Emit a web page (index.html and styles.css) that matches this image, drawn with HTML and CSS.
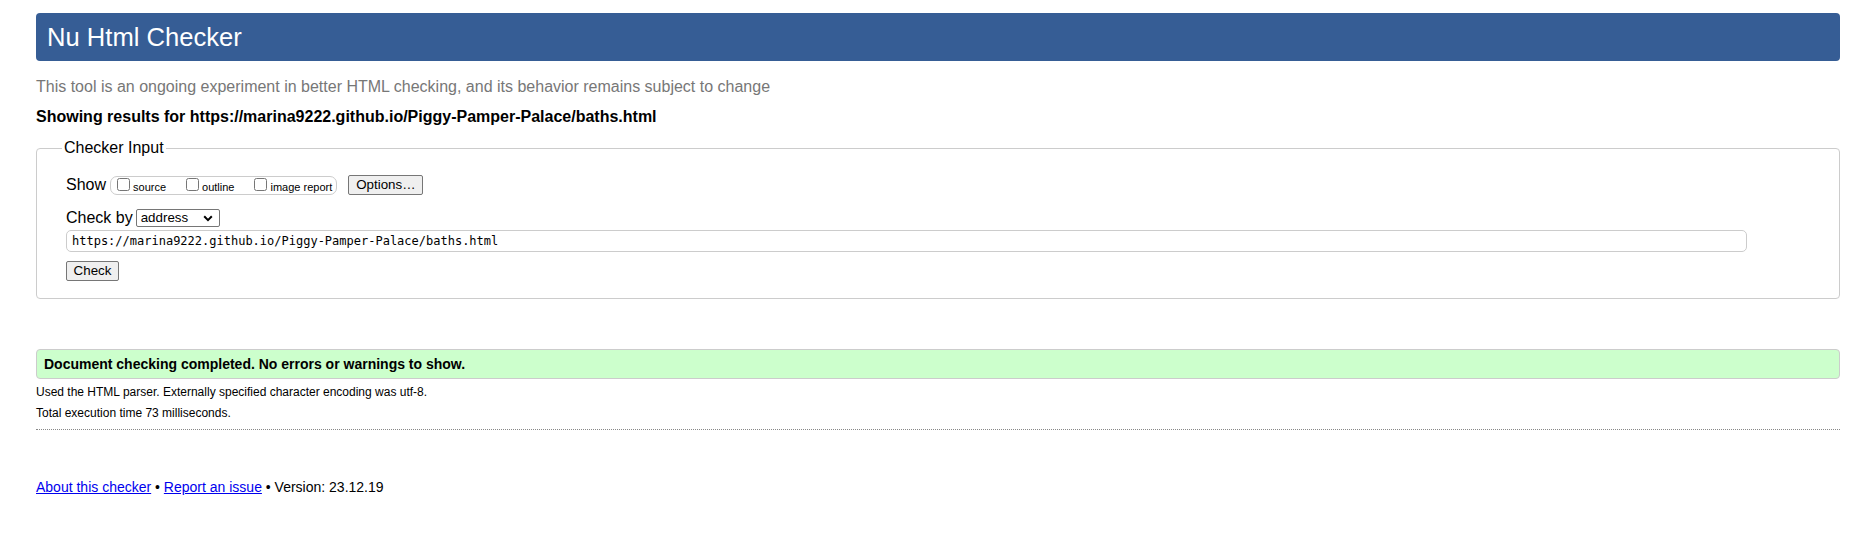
FILE: index.html
```html
<!DOCTYPE html>
<html lang="en">
<head>
<meta charset="utf-8">
<title>Showing results for https://marina9222.github.io/Piggy-Pamper-Palace/baths.html - Nu Html Checker</title>
<link rel="stylesheet" href="styles.css">
</head>
<body>
<div class="page">
  <h1 class="masthead">Nu Html Checker</h1>
  <p class="intro">This tool is an ongoing experiment in better HTML checking, and its behavior remains subject to change</p>
  <h2 class="results-for">Showing results for https://marina9222.github.io/Piggy-Pamper-Palace/baths.html</h2>

  <fieldset class="checker-input">
    <legend class="checker-legend">Checker Input</legend>
    <div class="row show-row">
      <span class="row-label">Show</span>
      <span class="show-group">
        <label class="opt"><input type="checkbox" class="cb"><span>source</span></label>
        <label class="opt"><input type="checkbox" class="cb"><span>outline</span></label>
        <label class="opt last"><input type="checkbox" class="cb"><span>image report</span></label>
      </span>
      <button type="button" class="btn options-btn">Options…</button>
    </div>
    <div class="row checkby-row">
      <span class="row-label">Check by</span>
      <span class="select">
        <span class="select-text">address</span>
        <svg class="chev" width="10" height="7" viewBox="0 0 10 7" aria-hidden="true"><path d="M1.2 1.3 L5 5.1 L8.8 1.3" fill="none" stroke="#000" stroke-width="2"/></svg>
      </span>
    </div>
    <div class="url-input">https://marina9222.github.io/Piggy-Pamper-Palace/baths.html</div>
    <div class="row check-row">
      <button type="button" class="btn check-btn">Check</button>
    </div>
  </fieldset>

  <div class="success">Document checking completed. No errors or warnings to show.</div>
  <p class="details">Used the HTML parser. Externally specified character encoding was utf-8.</p>
  <p class="details second">Total execution time 73 milliseconds.</p>
  <hr class="sep">

  <p class="footer"><a href="#">About this checker</a> • <a href="#">Report an issue</a> • Version: 23.12.19</p>
</div>
</body>
</html>
```

FILE: styles.css
```css
html, body {
  margin: 0;
  padding: 0;
  background: #fff;
}

.page {
  padding: 13px 15px 0 36px;
  font-family: "Liberation Sans", Arial, sans-serif;
  color: #000;
}

.masthead {
  margin: 0;
  height: 48px;
  box-sizing: border-box;
  padding: 9px 11px;
  background: #365d95;
  color: #fff;
  font-size: 25.6px;
  line-height: 30px;
  font-weight: normal;
  border-radius: 4px;
}

.intro {
  margin: 17px 0 0;
  font-size: 16px;
  line-height: 18px;
  color: #777;
}

.results-for {
  margin: 12px 0 0;
  font-size: 16px;
  line-height: 18px;
  font-weight: bold;
  color: #000;
}

.checker-input {
  margin: 13px 0 0;
  padding: 18px 28px 17px 29px;
  border: 1px solid #ccc;
  border-radius: 4px;
  min-width: 0;
}

.checker-legend {
  margin-left: -4px;
  padding: 0 2px;
  font-size: 16px;
  line-height: 18px;
}

.row {
  display: flex;
  align-items: center;
}

.row-label {
  font-size: 16px;
  line-height: 18px;
}

.show-row {
  height: 20px;
}

.show-group {
  display: flex;
  align-items: center;
  height: 19px;
  box-sizing: border-box;
  margin-left: 4px;
  padding: 0 4px 0 2px;
  border: 1px solid #ccc;
  border-radius: 7px;
}

.opt {
  display: flex;
  align-items: center;
  font-size: 11px;
  line-height: 13px;
  margin-right: 16px;
}

.opt.last {
  margin-right: 0;
}

.cb {
  width: 13px;
  height: 13px;
  margin: 0 3px 0 4px;
  position: relative;
  top: -1px;
}

.opt span {
  position: relative;
  top: 2px;
}

.btn {
  font-family: "Liberation Sans", Arial, sans-serif;
  font-size: 13.33px;
  line-height: 16px;
  height: 20px;
  box-sizing: border-box;
  padding: 1px 7px;
  background: #efefef;
  border: 1px solid #767676;
  border-radius: 2px;
  color: #000;
}

.options-btn {
  margin-left: 11px;
  width: 75px;
}

.checkby-row {
  margin-top: 13px;
  height: 19px;
}

.select {
  display: flex;
  align-items: center;
  justify-content: space-between;
  width: 84px;
  height: 18px;
  box-sizing: border-box;
  margin-left: 3px;
  margin-top: 1px;
  padding: 0 6px 0 4px;
  border: 1px solid #767676;
  border-radius: 2px;
  background: #fff;
  font-size: 13.33px;
  line-height: 16px;
}

.chev {
  display: block;
}

.url-input {
  margin-top: 3px;
  height: 22px;
  width: 1681px;
  box-sizing: border-box;
  padding: 0 5px;
  border: 1px solid #ccc;
  border-radius: 5px;
  font-family: "DejaVu Sans Mono", "Liberation Mono", monospace;
  font-size: 12px;
  line-height: 20px;
  color: #000;
  white-space: nowrap;
}

.check-row {
  margin-top: 9px;
}

.check-btn {
  width: 53px;
  padding: 1px 0;
}

.success {
  margin-top: 50px;
  height: 30px;
  box-sizing: border-box;
  padding: 6px 7px;
  background: #ccffcc;
  border: 1px solid #ccc;
  border-radius: 4px;
  font-size: 14px;
  line-height: 16px;
  font-weight: bold;
}

.details {
  margin: 6px 0 0;
  font-size: 12px;
  line-height: 14px;
  color: #000;
}

.details.second {
  margin-top: 7px;
}

.sep {
  margin: 9px 0 0;
  border: 0;
  border-top: 1px dotted #888;
  height: 0;
}

.footer {
  margin: 49px 0 0;
  font-size: 14px;
  line-height: 16px;
  color: #000;
}

.footer a {
  color: #00e;
  text-decoration: underline;
}
```
